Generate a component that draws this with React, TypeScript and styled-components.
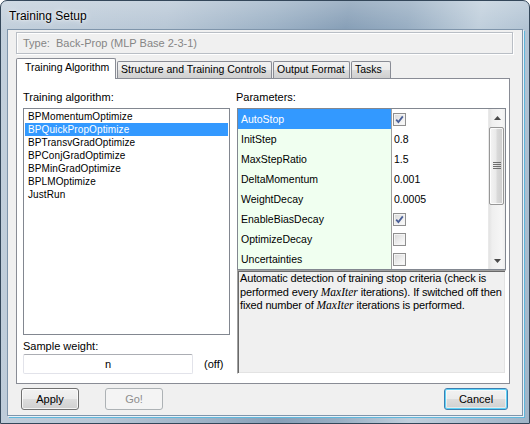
import React from 'react';
import styled, { createGlobalStyle } from 'styled-components';

const GlobalStyle = createGlobalStyle`
  html, body {
    margin: 0;
    padding: 0;
  }
  body {
    width: 530px;
    height: 424px;
    overflow: hidden;
    font-family: "Liberation Sans", Arial, sans-serif;
    font-size: 11px;
    color: #000;
  }
`;

const Window = styled.div`
  width: 530px;
  height: 424px;
  box-sizing: border-box;
  border: 1px solid #34475a;
  border-radius: 7px 7px 0 0;
  background:
    linear-gradient(180deg, rgba(255, 255, 255, 0.22), rgba(255, 255, 255, 0) 28px),
    linear-gradient(100deg, #c3d0dc 0%, #b8c7d6 28%, #9db2c6 46%, #879fb7 58%, #97adc2 68%, #c0cfdc 80%, #afc1d2 90%, #9fb4c7 100%);
  display: flex;
  flex-direction: column;
  overflow: hidden;
`;

const TitleBar = styled.div`
  height: 29px;
  flex: none;
  display: flex;
  align-items: center;
  padding-left: 8px;
  font-size: 12px;
  color: #000;
  text-shadow: 0 0 6px rgba(255, 255, 255, 0.95), 0 0 2px rgba(255, 255, 255, 0.9);
`;

const Client = styled.div`
  flex: 1;
  margin: 0 7px 8px 7px;
  background: #f0f0f0;
  box-shadow: 0 0 0 1px #7f95ab, 1px 1px 0 1px #eaf2f8, 2px 2px 0 1px #5fb7dc;
  display: flex;
  flex-direction: column;
  padding: 2px 9px 0 8px;
`;

const TypeBox = styled.div`
  height: 22px;
  box-sizing: border-box;
  border: 1px solid #b9bec5;
  box-shadow: inset 1px 1px 0 #fff, 1px 1px 0 #fff;
  padding-left: 6px;
  line-height: 20px;
  color: #858585;
  white-space: pre;
`;

const TabStrip = styled.div`
  margin-top: 4px;
  height: 20px;
  display: flex;
  align-items: flex-end;
  position: relative;
  z-index: 1;
`;

const Tab = styled.div<{ $active?: boolean; $width: number }>`
  width: ${(p) => p.$width}px;
  height: ${(p) => (p.$active ? 21 : 17)}px;
  margin-bottom: ${(p) => (p.$active ? -1 : 0)}px;
  box-sizing: border-box;
  border: 1px solid #898c95;
  border-bottom: none;
  border-radius: 2px 2px 0 0;
  background: ${(p) =>
    p.$active
      ? '#fff'
      : 'linear-gradient(180deg, #f2f2f2 0%, #ebebeb 50%, #dddddd 50%, #cfcfcf 100%)'};
  font-size: 10.5px;
  line-height: ${(p) => (p.$active ? 17 : 15)}px;
  padding-left: ${(p) => (p.$active ? 8 : 3)}px;
  white-space: nowrap;
  & + & {
    margin-left: 1px;
  }
`;

const Panel = styled.div`
  width: 494px;
  height: 306px;
  box-sizing: border-box;
  border: 1px solid #898c95;
  background: #fff;
  display: grid;
  grid-template-columns: 207px 269px;
  column-gap: 7px;
  padding: 12px 0 0 6px;
`;

const Column = styled.div`
  display: flex;
  flex-direction: column;
`;

const FieldLabel = styled.div`
  height: 13px;
  line-height: 13px;
  white-space: nowrap;
`;

const ListBox = styled.div`
  margin-top: 4px;
  height: 227px;
  box-sizing: border-box;
  border: 1px solid #828790;
  padding: 1px;
`;

const ListItem = styled.div<{ $selected?: boolean }>`
  height: 13px;
  line-height: 13px;
  padding-left: 3px;
  font-size: 10px;
  letter-spacing: 0.1px;
  background: ${(p) => (p.$selected ? '#3399ff' : 'transparent')};
  color: ${(p) => (p.$selected ? '#fff' : '#000')};
`;

const SampleLabel = styled(FieldLabel)`
  margin-top: 5px;
`;

const InputRow = styled.div`
  margin-top: 1px;
  display: flex;
  align-items: center;
`;

const TextInput = styled.div`
  width: 170px;
  height: 20px;
  box-sizing: border-box;
  border: 1px solid #e2e3ea;
  border-top-color: #abadb3;
  border-radius: 2px;
  text-align: center;
  line-height: 18px;
`;

const OffText = styled.span`
  margin-left: 11px;
`;

const ParamLabel = styled(FieldLabel)`
  margin-left: -1px;
`;

const GridBox = styled.div`
  margin-top: 4px;
  height: 162px;
  box-sizing: border-box;
  border: 1px solid #828790;
  display: flex;
  overflow: hidden;
`;

const Rows = styled.div`
  flex: 1;
  overflow: hidden;
`;

const Row = styled.div`
  display: grid;
  grid-template-columns: 154px 1fr;
  height: 20px;
  box-sizing: border-box;
  border-bottom: 1px solid #a0a0a0;
  font-size: 10.5px;
`;

const NameCell = styled.div<{ $selected?: boolean }>`
  border-right: 1px solid #a0a0a0;
  background: ${(p) => (p.$selected ? '#3399ff' : '#f0fff0')};
  color: ${(p) => (p.$selected ? '#fff' : '#000')};
  padding-left: 3px;
  line-height: 20px;
  white-space: nowrap;
`;

const ValueCell = styled.div`
  background: #fff;
  padding-left: 2px;
  line-height: 20px;
  display: flex;
  align-items: center;
`;

const CheckBox = styled.div`
  width: 13px;
  height: 13px;
  margin-left: -1px;
  box-sizing: border-box;
  border: 1px solid #8f8f8f;
  background: linear-gradient(135deg, #d6d6d6 0%, #eeeeee 55%, #fdfdfd 100%);
  box-shadow: inset 0 0 0 1px #f4f4f4;
  display: flex;
  align-items: center;
  justify-content: center;
`;

const ScrollBar = styled.div`
  width: 17px;
  flex: none;
  display: flex;
  flex-direction: column;
  background: linear-gradient(90deg, #e3e3e3 0%, #efefef 20%, #f6f6f6 80%, #eeeeee 100%);
  border-left: 1px solid #e9e9e9;
  box-sizing: border-box;
`;

const ArrowButton = styled.div<{ $height: number }>`
  height: ${(p) => p.$height}px;
  display: flex;
  align-items: center;
  justify-content: center;
`;

const TrackGap = styled.div`
  flex: 1;
`;

const Thumb = styled.div`
  height: 78px;
  margin: 0 1px 0 0;
  box-sizing: border-box;
  border: 1px solid #979797;
  border-radius: 2px;
  background: linear-gradient(90deg, #f4f4f4 0%, #eaeaea 45%, #d9d9d9 55%, #cdcdcd 100%);
  box-shadow: inset 0 0 0 1px rgba(255, 255, 255, 0.8);
  display: flex;
  align-items: center;
  justify-content: center;
`;

const Description = styled.div`
  height: 104px;
  box-sizing: border-box;
  border: 1px solid;
  border-color: #a0a0a0 #fff #fff #a0a0a0;
  box-shadow: inset 1px 1px 0 #696969, inset -1px -1px 0 #e3e3e3;
  background: #f0f0f0;
  padding: 1px 2px 0 2px;
  line-height: 13.5px;
  letter-spacing: -0.15px;
  white-space: nowrap;
`;

const MathName = styled.i`
  font-family: "Liberation Serif", "Times New Roman", serif;
  font-size: 11.5px;
  letter-spacing: 0;
`;

const ButtonBar = styled.div`
  margin-top: 4px;
  display: flex;
  padding-left: 5px;
  padding-right: 5px;
`;

const Button = styled.div<{ $kind?: 'normal' | 'disabled' | 'default'; $width: number }>`
  width: ${(p) => p.$width}px;
  height: 22px;
  box-sizing: border-box;
  border: 1px solid ${(p) => (p.$kind === 'disabled' ? '#adb2b5' : p.$kind === 'default' ? '#3c7fb1' : '#707070')};
  border-radius: 3px;
  background: ${(p) =>
    p.$kind === 'disabled'
      ? '#f4f4f4'
      : 'linear-gradient(180deg, #f2f2f2 0%, #ebebeb 50%, #dddddd 50%, #cfcfcf 100%)'};
  box-shadow: ${(p) =>
    p.$kind === 'default'
      ? 'inset 0 0 0 1px #5fd3f8, inset 0 0 0 2px rgba(255,255,255,0.5)'
      : p.$kind === 'disabled'
      ? 'none'
      : 'inset 0 0 0 1px rgba(255,255,255,0.75)'};
  color: ${(p) => (p.$kind === 'disabled' ? '#8d8d8d' : '#000')};
  text-align: center;
  line-height: 20px;
  & + & {
    margin-left: 26px;
  }
  &:last-child {
    margin-left: auto;
  }
`;

const algorithms = [
  'BPMomentumOptimize',
  'BPQuickPropOptimize',
  'BPTransvGradOptimize',
  'BPConjGradOptimize',
  'BPMinGradOptimize',
  'BPLMOptimize',
  'JustRun',
];

const params: { name: string; value: string | boolean }[] = [
  { name: 'AutoStop', value: true },
  { name: 'InitStep', value: '0.8' },
  { name: 'MaxStepRatio', value: '1.5' },
  { name: 'DeltaMomentum', value: '0.001' },
  { name: 'WeightDecay', value: '0.0005' },
  { name: 'EnableBiasDecay', value: true },
  { name: 'OptimizeDecay', value: false },
  { name: 'Uncertainties', value: false },
];

const tabs = [
  { label: 'Training Algorithm', width: 100, active: true },
  { label: 'Structure and Training Controls', width: 155 },
  { label: 'Output Format', width: 77 },
  { label: 'Tasks', width: 40 },
];

const Check = ({ checked }: { checked: boolean }) => (
  <CheckBox>
    {checked && (
      <svg width="9" height="9" viewBox="0 0 9 9">
        <path d="M1.2 4.6 L3.4 7 L7.8 1.4" fill="none" stroke="#4a5f97" strokeWidth="1.8" />
      </svg>
    )}
  </CheckBox>
);

const Arrow = ({ up }: { up?: boolean }) => (
  <svg width="7" height="4" viewBox="0 0 7 4">
    <polygon points={up ? '0,4 3.5,0 7,4' : '0,0 3.5,4 7,0'} fill="#4a4a4a" />
  </svg>
);

const Grip = () => (
  <svg width="8" height="8" viewBox="0 0 8 8">
    {[0, 2, 4, 6].map((y) => (
      <rect key={y} x="0" y={y} width="8" height="1" fill="#6e6e6e" />
    ))}
  </svg>
);

export default function App() {
  return (
    <>
      <GlobalStyle />
      <Window>
        <TitleBar>Training Setup</TitleBar>
        <Client>
          <TypeBox>{'Type:  Back-Prop (MLP Base 2-3-1)'}</TypeBox>
          <TabStrip>
            {tabs.map((t) => (
              <Tab key={t.label} $active={t.active} $width={t.width}>
                {t.label}
              </Tab>
            ))}
          </TabStrip>
          <Panel>
            <Column>
              <FieldLabel>Training algorithm:</FieldLabel>
              <ListBox>
                {algorithms.map((a) => (
                  <ListItem key={a} $selected={a === 'BPQuickPropOptimize'}>
                    {a}
                  </ListItem>
                ))}
              </ListBox>
              <SampleLabel>Sample weight:</SampleLabel>
              <InputRow>
                <TextInput>n</TextInput>
                <OffText>(off)</OffText>
              </InputRow>
            </Column>
            <Column>
              <ParamLabel>Parameters:</ParamLabel>
              <GridBox>
                <Rows>
                  {params.map((p) => (
                    <Row key={p.name}>
                      <NameCell $selected={p.name === 'AutoStop'}>{p.name}</NameCell>
                      <ValueCell>
                        {typeof p.value === 'boolean' ? <Check checked={p.value} /> : p.value}
                      </ValueCell>
                    </Row>
                  ))}
                </Rows>
                <ScrollBar>
                  <ArrowButton $height={18}>
                    <Arrow up />
                  </ArrowButton>
                  <Thumb>
                    <Grip />
                  </Thumb>
                  <TrackGap />
                  <ArrowButton $height={17}>
                    <Arrow />
                  </ArrowButton>
                </ScrollBar>
              </GridBox>
              <Description>
                Automatic detection of training stop criteria (check is
                <br />
                performed every <MathName>MaxIter</MathName> iterations). If switched off then
                <br />
                fixed number of <MathName>MaxIter</MathName> iterations is performed.
              </Description>
            </Column>
          </Panel>
          <ButtonBar>
            <Button $width={58}>Apply</Button>
            <Button $width={58} $kind="disabled">
              Go!
            </Button>
            <Button $width={64} $kind="default">
              Cancel
            </Button>
          </ButtonBar>
        </Client>
      </Window>
    </>
  );
}
